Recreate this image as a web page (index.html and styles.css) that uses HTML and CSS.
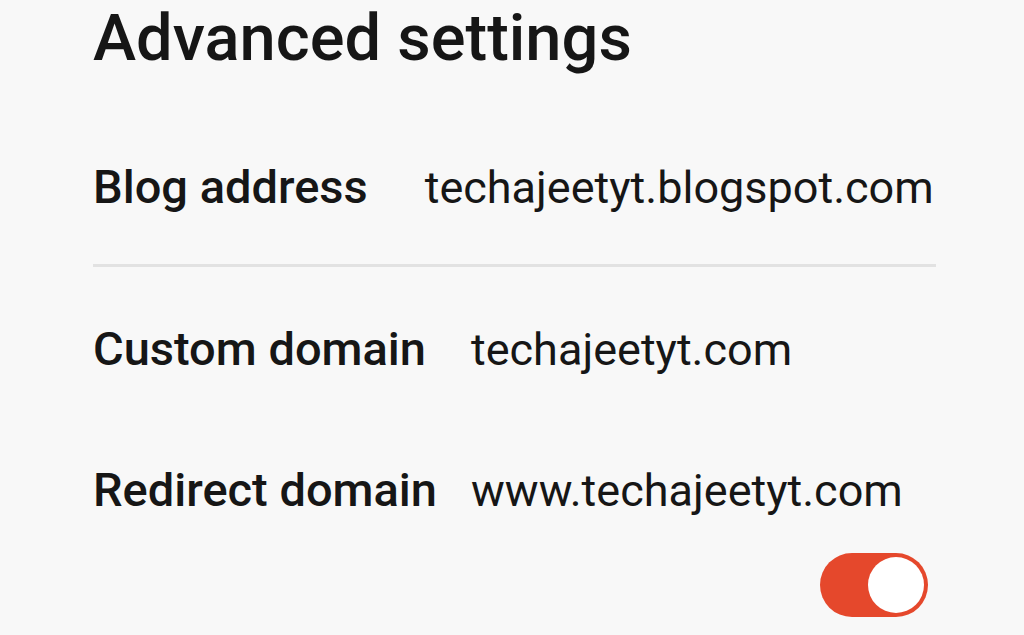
FILE: index.html
```html
<!DOCTYPE html>
<html lang="en">
<head>
    <meta charset="UTF-8">
    <meta name="viewport" content="width=device-width, initial-scale=1.0">
    <title>Advanced settings</title>
    <link rel="stylesheet" href="styles.css">
</head>
<body>
    <div class="container">
        <h1>Advanced settings</h1>

        <div class="row row-first">
            <span class="label">Blog address</span>
            <span class="value">techajeetyt.blogspot.com</span>
        </div>
        <hr class="divider">

        <div class="row row-custom">
            <span class="label">Custom domain</span>
            <span class="value">techajeetyt.com</span>
        </div>

        <div class="row row-redirect">
            <span class="label">Redirect domain</span>
            <span class="value">www.techajeetyt.com</span>
        </div>

        <div class="toggle-row">
            <div class="toggle on">
                <div class="knob"></div>
            </div>
        </div>
    </div>
</body>
</html>
```

FILE: styles.css
```css
body {
    font-family: Roboto, "Noto Sans", sans-serif;
    background-color: #f8f8f8;
    color: #161616;
    margin: 0;
}
.container {
    width: 843px;
    padding: 0 0 0 93px;
}
h1 {
    font-size: 65px;
    font-weight: 500;
    margin: 0;
    padding-top: 3px;
    line-height: 70px;
    white-space: nowrap;
}
.row {
    display: flex;
    align-items: baseline;
    font-size: 46px;
    line-height: 56px;
    white-space: nowrap;
}
.label {
    font-size: 47px;
    font-weight: 500;
}
.value {
    font-size: 45px;
}
.row-first {
    margin-top: 86px;
    gap: 57px;
}
.row-custom {
    margin-top: 54px;
    gap: 45px;
}
.row-redirect {
    margin-top: 84px;
    gap: 34px;
}
.divider {
    border: 0;
    height: 3px;
    background-color: #e2e2e2;
    margin: 48px 0 0 0;
}
.toggle-row {
    display: flex;
    justify-content: flex-end;
    padding-right: 8px;
    margin-top: 34px;
}
.toggle {
    width: 108px;
    height: 64px;
    border-radius: 32px;
    background-color: #e5482c;
    box-sizing: border-box;
    padding: 4px;
    display: flex;
    justify-content: flex-end;
}
.knob {
    width: 56px;
    height: 56px;
    border-radius: 50%;
    background-color: #fff;
}
```
